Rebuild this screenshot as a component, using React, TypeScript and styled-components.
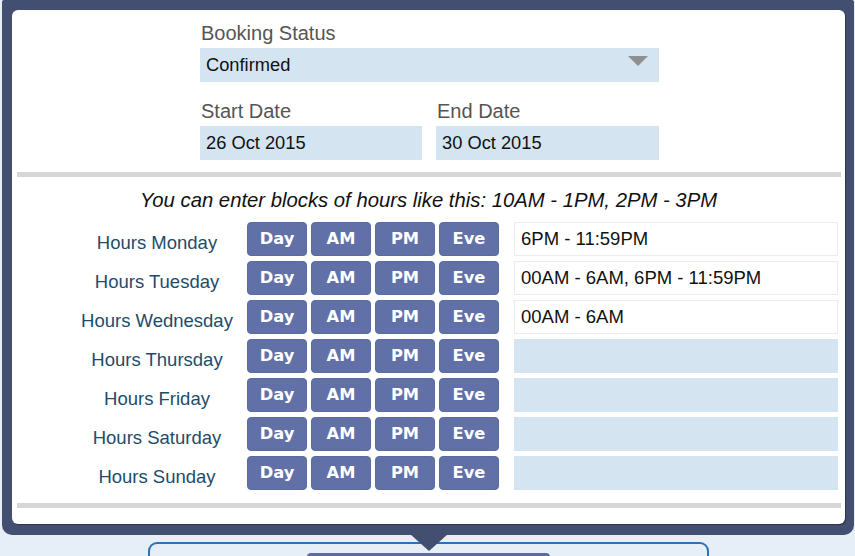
import React from "react";
import styled, { createGlobalStyle } from "styled-components";

const Global = createGlobalStyle`
  html, body { margin: 0; padding: 0; background: #e6eef8; overflow: hidden; }
  body { font-family: "Liberation Sans", Arial, sans-serif; }
  * { box-sizing: border-box; }
`;

const Page = styled.div`
  width: 855px;
  height: 556px;
  display: flex;
  flex-direction: column;
`;

const Frame = styled.div`
  position: relative;
  margin: 0 1px 0 2px;
  padding: 10px 9px 11px 10px;
  background: #434f71;
  border-radius: 2px 2px 10px 10px;
`;

const Pointer = styled.div`
  position: absolute;
  left: 408px;
  bottom: -16px;
  width: 0;
  height: 0;
  border-left: 19px solid transparent;
  border-right: 19px solid transparent;
  border-top: 17px solid #434f71;
  z-index: 2;
`;

const Panel = styled.div`
  background: #fff;
  border-radius: 6px;
  box-shadow: 1px 1px 1px rgba(0, 0, 0, 0.35);
  height: 514px;
  padding-top: 11px;
  display: flex;
  flex-direction: column;
`;

const TopForm = styled.div`
  margin-left: 188px;
  width: 459px;
  display: flex;
  flex-direction: column;
`;

const FieldLabel = styled.div`
  font-size: 20px;
  line-height: 24px;
  color: #555;
  padding-left: 1px;
  margin-bottom: 3px;
`;

const Field = styled.div`
  height: 34px;
  background: #d4e5f1;
  padding: 0 6px;
  font-size: 18.3px;
  color: #111;
  display: flex;
  align-items: center;
`;

const SelectField = styled(Field)`
  justify-content: space-between;
  padding-right: 11px;
`;

const Caret = styled.svg`
  align-self: flex-start;
  margin-top: 8px;
`;

const DateRow = styled.div`
  display: grid;
  grid-template-columns: 222px 223px;
  column-gap: 14px;
  margin-top: 17px;
`;

const Column = styled.div`
  display: flex;
  flex-direction: column;
`;

const Separator = styled.div<{ $top: number }>`
  height: 5px;
  background: #d6d6d6;
  margin: ${(p) => p.$top}px 4px 0 5px;
`;

const Hint = styled.div`
  margin-top: 11px;
  font-size: 20.3px;
  line-height: 24px;
  font-style: italic;
  text-align: center;
  color: #111;
`;

const Rows = styled.div`
  margin: 10px 0 0 65px;
  display: flex;
  flex-direction: column;
  gap: 5px;
`;

const Row = styled.div`
  display: flex;
  align-items: center;
  height: 34px;
`;

const DayLabel = styled.div`
  width: 160px;
  margin-right: 10px;
  text-align: center;
  font-size: 18.5px;
  line-height: 22px;
  color: #1d4c6b;
  padding-top: 8px;
`;

const Buttons = styled.div`
  display: grid;
  grid-template-columns: repeat(4, 60px);
  column-gap: 4px;
  margin-right: 15px;
`;

const TimeButton = styled.button`
  height: 34px;
  padding: 0;
  border: 1px solid #5a6aa2;
  border-radius: 4px;
  background: #6171a8;
  color: #fff;
  font-family: "DejaVu Sans", Verdana, sans-serif;
  font-weight: bold;
  font-size: 16.3px;
  line-height: 1;
`;

const HoursInput = styled.div<{ $filled: boolean }>`
  width: 324px;
  height: 34px;
  padding: 0 6px;
  display: flex;
  align-items: center;
  font-size: 18.5px;
  color: #111;
  background: ${(p) => (p.$filled ? "#fff" : "#d4e5f1")};
  border: 1px solid ${(p) => (p.$filled ? "#ececec" : "#d4e5f1")};
`;

const Below = styled.div`
  padding-left: 148px;
  margin-top: 7px;
`;

const OutlineBox = styled.div`
  width: 561px;
  height: 40px;
  border: 2px solid #2b73b9;
  border-radius: 9px;
  background: #e6eef8;
  padding: 9px 0 0 157px;
`;

const InnerBar = styled.div`
  width: 243px;
  height: 20px;
  border-radius: 4px;
  background: #5c6b9c;
`;

const days: { name: string; hours: string }[] = [
  { name: "Hours Monday", hours: "6PM - 11:59PM" },
  { name: "Hours Tuesday", hours: "00AM - 6AM, 6PM - 11:59PM" },
  { name: "Hours Wednesday", hours: "00AM - 6AM" },
  { name: "Hours Thursday", hours: "" },
  { name: "Hours Friday", hours: "" },
  { name: "Hours Saturday", hours: "" },
  { name: "Hours Sunday", hours: "" },
];

const slots = ["Day", "AM", "PM", "Eve"];

export default function App() {
  return (
    <Page>
      <Global />
      <Frame>
        <Panel>
          <TopForm>
            <FieldLabel>Booking Status</FieldLabel>
            <SelectField>
              <span>Confirmed</span>
              <Caret width="20" height="10" viewBox="0 0 20 10">
                <polygon points="0,0 20,0 10,10" fill="#8f8f8f" />
              </Caret>
            </SelectField>
            <DateRow>
              <Column>
                <FieldLabel>Start Date</FieldLabel>
                <Field>26 Oct 2015</Field>
              </Column>
              <Column>
                <FieldLabel>End Date</FieldLabel>
                <Field>30 Oct 2015</Field>
              </Column>
            </DateRow>
          </TopForm>
          <Separator $top={12} />
          <Hint>You can enter blocks of hours like this: 10AM - 1PM, 2PM - 3PM</Hint>
          <Rows>
            {days.map((d) => (
              <Row key={d.name}>
                <DayLabel>{d.name}</DayLabel>
                <Buttons>
                  {slots.map((s) => (
                    <TimeButton key={s}>{s}</TimeButton>
                  ))}
                </Buttons>
                <HoursInput $filled={d.hours !== ""}>{d.hours}</HoursInput>
              </Row>
            ))}
          </Rows>
          <Separator $top={13} />
        </Panel>
        <Pointer />
      </Frame>
      <Below>
        <OutlineBox>
          <InnerBar />
        </OutlineBox>
      </Below>
    </Page>
  );
}
